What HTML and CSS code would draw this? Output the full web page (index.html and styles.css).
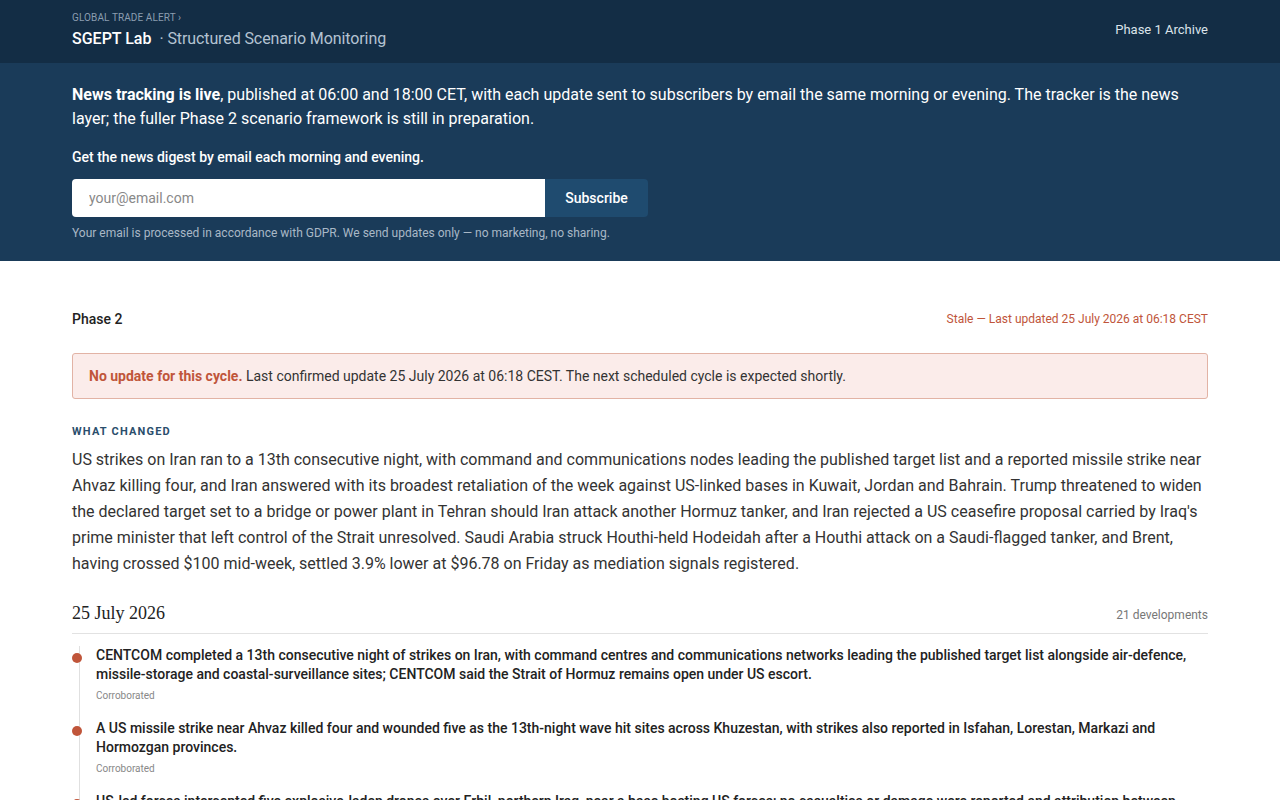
FILE: index.html
```html
<!DOCTYPE html>
<html lang="en">
<head>
    <meta charset="UTF-8">
    <meta name="viewport" content="width=device-width, initial-scale=1.0">
    <title>SGEPT Lab · Structured Scenario Monitoring</title>
    <link rel="stylesheet" href="styles.css">
</head>
<body>
    <header class="topbar">
        <div class="wrap topbar-inner">
            <div class="brand">
                <div class="crumb">GLOBAL TRADE ALERT ›</div>
                <div class="title"><strong>SGEPT Lab</strong><span class="sub">· Structured Scenario Monitoring</span></div>
            </div>
            <a class="archive" href="#">Phase 1 Archive</a>
        </div>
    </header>

    <section class="banner">
        <div class="wrap">
            <p class="lead"><strong>News tracking is live</strong>, published at 06:00 and 18:00 CET, with each update sent to subscribers by email the same morning or evening. The tracker is the news layer; the fuller Phase 2 scenario framework is still in preparation.</p>
            <div class="signup-label">Get the news digest by email each morning and evening.</div>
            <form class="signup">
                <input type="email" placeholder="your@email.com">
                <button type="button">Subscribe</button>
            </form>
            <div class="gdpr">Your email is processed in accordance with GDPR. We send updates only — no marketing, no sharing.</div>
        </div>
    </section>

    <main class="wrap main">
        <div class="phase-row">
            <div class="phase">Phase 2</div>
            <div class="stale">Stale — Last updated 25 July 2026 at 06:18 CEST</div>
        </div>

        <div class="alert"><strong>No update for this cycle.</strong> Last confirmed update 25 July 2026 at 06:18 CEST. The next scheduled cycle is expected shortly.</div>

        <h2 class="kicker">WHAT CHANGED</h2>
        <p class="summary">US strikes on Iran ran to a 13th consecutive night, with command and communications nodes leading the published target list and a reported missile strike near Ahvaz killing four, and Iran answered with its broadest retaliation of the week against US-linked bases in Kuwait, Jordan and Bahrain. Trump threatened to widen the declared target set to a bridge or power plant in Tehran should Iran attack another Hormuz tanker, and Iran rejected a US ceasefire proposal carried by Iraq's prime minister that left control of the Strait unresolved. Saudi Arabia struck Houthi-held Hodeidah after a Houthi attack on a Saudi-flagged tanker, and Brent, having crossed $100 mid-week, settled 3.9% lower at $96.78 on Friday as mediation signals registered.</p>

        <div class="day-head">
            <h3 class="day">25 July 2026</h3>
            <span class="count">21 developments</span>
        </div>

        <ul class="timeline">
            <li class="item">
                <div class="item-text">CENTCOM completed a 13th consecutive night of strikes on Iran, with command centres and communications networks leading the published target list alongside air-defence, missile-storage and coastal-surveillance sites; CENTCOM said the Strait of Hormuz remains open under US escort.</div>
                <div class="tag">Corroborated</div>
            </li>
            <li class="item">
                <div class="item-text">A US missile strike near Ahvaz killed four and wounded five as the 13th-night wave hit sites across Khuzestan, with strikes also reported in Isfahan, Lorestan, Markazi and Hormozgan provinces.</div>
                <div class="tag">Corroborated</div>
            </li>
            <li class="item">
                <div class="item-text">US-led forces intercepted five explosive-laden drones over Erbil, northern Iraq, near a base hosting US forces; no casualties or damage were reported and attribution between Iran-aligned groups remained unclear.</div>
                <div class="tag">Corroborated</div>
            </li>
        </ul>
    </main>
</body>
</html>
```

FILE: styles.css
```css
* {
    box-sizing: border-box;
}

body {
    margin: 0;
    font-family: Roboto, "Liberation Sans", Arial, sans-serif;
    color: #222;
    background: #fff;
}

.wrap {
    width: 1136px;
    margin: 0 auto;
}

/* top bar */
.topbar {
    background: #132d45;
    height: 63px;
}

.topbar-inner {
    display: flex;
    justify-content: space-between;
    align-items: center;
    height: 100%;
}

.brand {
    padding-bottom: 3px;
}

.crumb {
    font-size: 10px;
    color: #8b9db0;
    letter-spacing: 0.1px;
    line-height: 12px;
}

.title {
    margin-top: 5px;
    font-size: 16px;
    line-height: 20px;
    color: #fff;
}

.title strong {
    font-weight: 500;
}

.title .sub {
    color: #b4c3d2;
    margin-left: 8px;
    font-weight: 400;
    letter-spacing: -0.1px;
}

.archive {
    font-size: 13px;
    color: #dbe3ea;
    text-decoration: none;
    padding-bottom: 4px;
}

/* banner */
.banner {
    background: #1a3b59;
    color: #fff;
    padding: 20px 0 20px;
}

.lead {
    margin: 0;
    font-size: 16px;
    line-height: 24px;
}

.lead strong {
    font-weight: 700;
}

.signup-label {
    margin-top: 17px;
    font-size: 14px;
    font-weight: 500;
    line-height: 18px;
}

.signup {
    display: flex;
    margin-top: 13px;
    width: 576px;
    height: 38px;
}

.signup input {
    flex: 1;
    border: 0;
    border-radius: 4px 0 0 4px;
    padding: 0 17px;
    font-family: inherit;
    font-size: 14px;
    color: #333;
}

.signup input::placeholder {
    color: #888;
}

.signup button {
    width: 103px;
    border: 0;
    border-radius: 0 4px 4px 0;
    background: #1f4b6f;
    color: #fff;
    font-family: inherit;
    font-size: 14px;
    font-weight: 500;
}

.gdpr {
    margin-top: 9px;
    font-size: 12px;
    color: #a9b8c6;
    line-height: 15px;
}

/* main */
.main {
    padding-top: 49px;
}

.phase-row {
    display: flex;
    justify-content: space-between;
    align-items: center;
    height: 17px;
}

.phase {
    font-size: 14px;
    font-weight: 500;
    color: #222;
}

.stale {
    font-size: 12px;
    color: #c0553a;
}

.alert {
    margin-top: 26px;
    background: #fbecea;
    border: 1px solid #e2b3a5;
    border-radius: 3px;
    padding: 13px 16px;
    font-size: 14px;
    line-height: 18px;
    color: #333;
}

.alert strong {
    color: #c0553a;
    font-weight: 700;
}

.kicker {
    margin: 26px 0 0;
    font-size: 11px;
    font-weight: 700;
    letter-spacing: 1.2px;
    color: #2a4e6c;
    line-height: 14px;
}

.summary {
    margin: 8px 0 0;
    font-size: 16px;
    line-height: 26px;
    color: #333;
}

.day-head {
    display: flex;
    justify-content: space-between;
    align-items: center;
    margin-top: 25px;
    padding-bottom: 9px;
    border-bottom: 1px solid #e2e2e2;
}

.day {
    margin: 0;
    font-family: "Liberation Serif", "DejaVu Serif", serif;
    font-size: 18px;
    font-weight: 400;
    color: #222;
    line-height: 22px;
}

.count {
    font-size: 12px;
    color: #777;
    padding-top: 3px;
}

.timeline {
    list-style: none;
    margin: 0;
    padding: 12px 0 0 24px;
    position: relative;
}

.timeline::before {
    content: "";
    position: absolute;
    left: 7px;
    top: 12px;
    bottom: 0;
    width: 1px;
    background: #e0e0e0;
}

.item {
    position: relative;
    margin-bottom: 17px;
}

.item::before {
    content: "";
    position: absolute;
    left: -24px;
    top: 7px;
    width: 10px;
    height: 10px;
    border-radius: 50%;
    background: #c0553a;
}

.item-text {
    font-size: 14px;
    font-weight: 500;
    line-height: 19px;
    color: #222;
}

.tag {
    margin-top: 6px;
    font-size: 10px;
    color: #888;
    line-height: 12px;
}
```
